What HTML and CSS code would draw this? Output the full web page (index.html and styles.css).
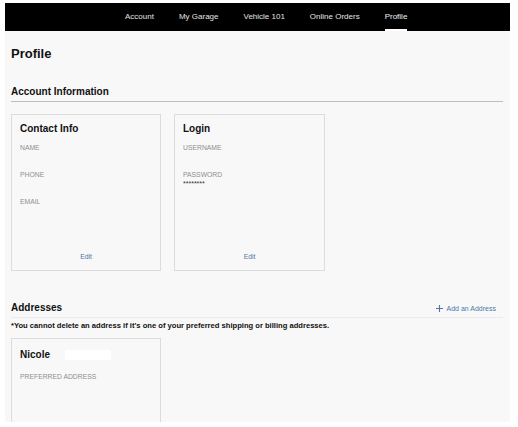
FILE: index.html
```html
<!DOCTYPE html>
<html>
<head>
<meta charset="utf-8">
<link rel="stylesheet" href="styles.css">
</head>
<body>
<div class="page">
  <nav class="topnav">
    <a class="nav-item">Account</a>
    <a class="nav-item">My Garage</a>
    <a class="nav-item">Vehicle 101</a>
    <a class="nav-item">Online Orders</a>
    <a class="nav-item active">Profile</a>
  </nav>
  <main class="content">
    <h1 class="page-title">Profile</h1>
    <h2 class="section-title">Account Information</h2>
    <div class="cards">
      <div class="card">
        <div class="card-title">Contact Info</div>
        <div class="field"><div class="label">NAME</div><div class="value"></div></div>
        <div class="field"><div class="label">PHONE</div><div class="value"></div></div>
        <div class="field"><div class="label">EMAIL</div><div class="value"></div></div>
        <a class="edit">Edit</a>
      </div>
      <div class="card card-wide">
        <div class="card-title">Login</div>
        <div class="field"><div class="label">USERNAME</div><div class="value"></div></div>
        <div class="field"><div class="label">PASSWORD</div><div class="value">********</div></div>
        <a class="edit">Edit</a>
      </div>
    </div>
    <div class="section-row">
      <h2 class="section-title2">Addresses</h2>
      <a class="add-link"><svg class="plus" width="7" height="7" viewBox="0 0 7 7"><path d="M3.5 0V7M0 3.5H7" stroke="#4f75a8" stroke-width="1.1"/></svg>Add an Address</a>
    </div>
    <p class="note">*You cannot delete an address if it's one of your preferred shipping or billing addresses.</p>
    <div class="card address-card">
      <div class="card-title name">Nicole <span class="redact"></span></div>
      <div class="label">PREFERRED ADDRESS</div>
    </div>
  </main>
</div>
</body>
</html>
```
FILE: styles.css
```css
html, body {
  margin: 0;
  padding: 0;
  background: #ffffff;
}
body {
  font-family: "Liberation Sans", Arial, sans-serif;
  color: #111;
}
.page {
  margin: 3px 8px 0 5px;
  height: 419px;
  background: #f8f8f8;
  overflow: hidden;
}
.topnav {
  height: 28px;
  background: #000;
  display: flex;
  align-items: stretch;
  gap: 25px;
  padding-left: 120px;
}
.nav-item {
  font-size: 8px;
  color: #e4e4e4;
  display: flex;
  align-items: center;
  border-bottom: 2px solid transparent;
  padding-top: 1px;
  box-sizing: border-box;
}
.nav-item.active {
  border-bottom-color: #fff;
  color: #f0f0f0;
}
.content {
  padding: 0 7px 0 6px;
}
.page-title {
  margin: 15px 0 0 0;
  font-size: 13px;
  line-height: 15px;
  font-weight: bold;
}
.section-title {
  margin: 25px 0 0 0;
  font-size: 10px;
  line-height: 12px;
  font-weight: bold;
  padding-bottom: 3px;
  border-bottom: 1px solid #bdbdbd;
}
.cards {
  display: flex;
  gap: 13px;
  margin-top: 12px;
}
.card {
  width: 150px;
  height: 157px;
  box-sizing: border-box;
  border: 1px solid #dcdcdc;
  background: #f8f8f8;
  padding: 8px 8px 9px 8px;
  display: flex;
  flex-direction: column;
}
.card-wide {
  width: 151px;
}
.card-title {
  font-size: 10px;
  line-height: 12px;
  font-weight: bold;
  margin-bottom: 9px;
}
.field {
  height: 27px;
}
.label {
  font-size: 6.8px;
  line-height: 8px;
  color: #8e8e8e;
}
.value {
  font-size: 7px;
  line-height: 9px;
  color: #333;
  min-height: 9px;
}
.edit {
  margin-top: auto;
  text-align: center;
  font-size: 6.8px;
  line-height: 8px;
  color: #4f75a8;
}
.section-row {
  margin-top: 31px;
  display: flex;
  align-items: center;
  justify-content: space-between;
  padding-bottom: 3px;
  border-bottom: 1px solid #ebebeb;
}
.section-title2 {
  margin: 0;
  font-size: 10px;
  line-height: 12px;
  font-weight: bold;
}
.add-link {
  display: flex;
  align-items: center;
  gap: 4px;
  font-size: 7px;
  color: #4f75a8;
  margin-right: 7px;
  margin-top: 1px;
}
.plus {
  display: block;
}
.note {
  margin: 3px 0 0 0;
  font-size: 7.6px;
  line-height: 9px;
  font-weight: bold;
  color: #111;
}
.address-card {
  margin-top: 8px;
  height: 120px;
  padding-top: 10px;
}
.name {
  display: flex;
  align-items: center;
  gap: 15px;
  margin-bottom: 12px;
}
.redact {
  display: inline-block;
  width: 46px;
  height: 10px;
  background: #fff;
}
```
